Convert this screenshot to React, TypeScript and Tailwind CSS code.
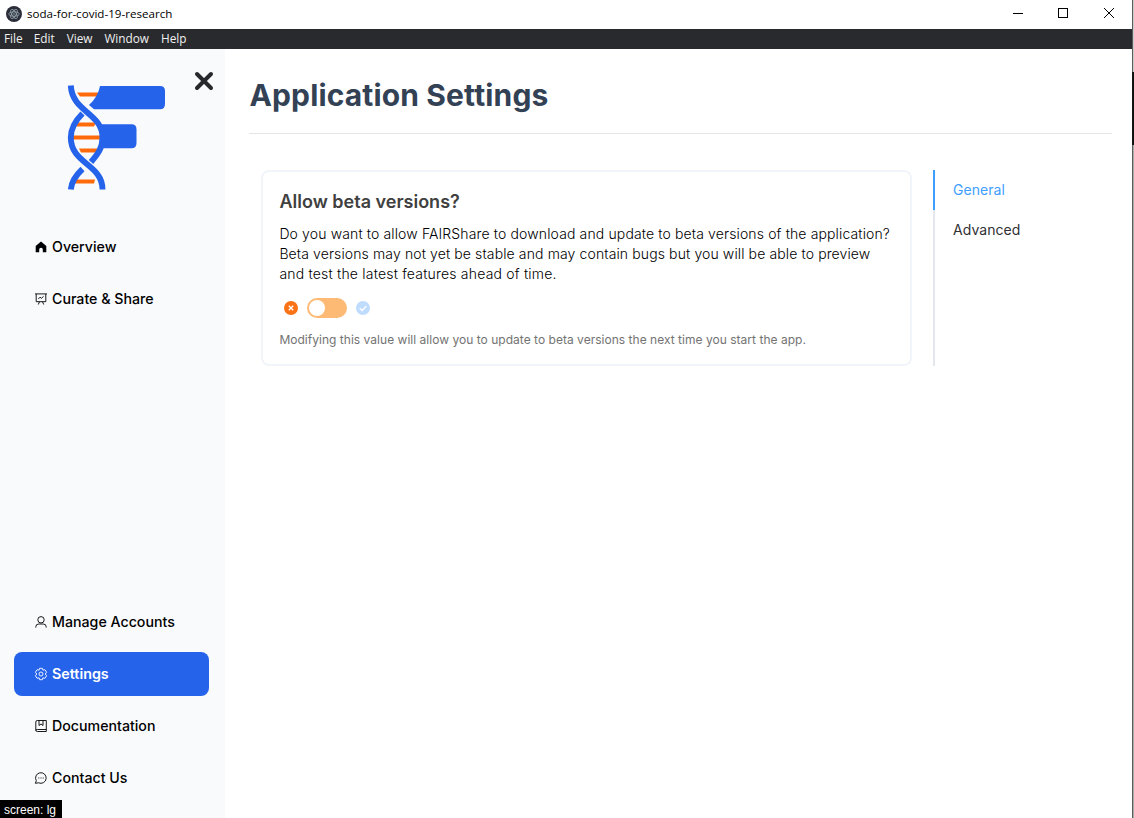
import React from "react";

function Item({ icon, label, active }: { icon: React.ReactNode; label: string; active?: boolean }) {
  return (
    <a
      className={
        active
          ? "flex h-11 items-center gap-[5px] rounded-lg bg-[#2563eb] pl-[21px] text-[14.3px] font-semibold text-white"
          : "flex h-11 items-center gap-[5px] rounded-lg pl-[21px] text-[14.2px] font-medium text-black"
      }
    >
      {icon}
      <span>{label}</span>
    </a>
  );
}

function Glyph({ children }: { children: React.ReactNode }) {
  return (
    <svg width="12" height="12" viewBox="0 0 12 12" fill="none" stroke="currentColor" strokeWidth="0.9" className="overflow-visible">
      {children}
    </svg>
  );
}

function Logo() {
  return (
    <svg width="98" height="106" viewBox="0 0 98 106" fill="none" className="mt-[36px] ml-[67px]">
      <g stroke="#ff6a0a" strokeWidth="4">
        <path d="M10 7.500L13 11.500H31V7.500ZM9 37.500H29L27 41.500H9ZM12 63.500H32V67.500H14ZM9 94.500H28L27 98.500H8Z" fill="#ff6a0a" stroke="none" />
        <path d="M6 52.500H34" />
      </g>
      <path d="M33 1H93Q98 1 98 6V19Q98 24.300 93 24.300H27L22 20Q31 12 33 1Z" fill="#2563eb" />
      <path d="M34 39.300H64.500Q69.500 39.300 69.500 44.300V58Q69.500 63.300 64.500 63.300H33Z" fill="#2563eb" />
      <g stroke="#2563eb" strokeWidth="5.900">
        <path d="M15.500 28.500C7 37 3.800 44 3.800 52.500C3.800 79 35.500 79 35.500 104.500" />
        <path d="M3.800 0.500C5 27 35.500 28 35.500 52.500C35.500 63 31 69 24 77" />
        <path d="M15.500 84C8 91 4.500 97 3.800 104.500" />
      </g>
    </svg>
  );
}

export default function App() {
  return (
    <div className="flex h-[818px] w-[1134px] overflow-hidden bg-white font-['Inter',sans-serif]">
      <div className="flex w-[1132px] flex-col">
        <header className="flex h-[29px] shrink-0 items-center bg-white">
          <svg width="16" height="16" viewBox="0 0 16 16" className="mb-[2px] ml-[6px]">
            <circle cx="8" cy="8" r="8" fill="#2b2e3a" />
            <g fill="none" stroke="#b8cdd5" strokeWidth=".7" opacity=".85">
              <ellipse cx="8" cy="8" rx="5.200" ry="2.200" />
              <ellipse cx="8" cy="8" rx="5.200" ry="2.200" transform="rotate(60 8 8)" />
              <ellipse cx="8" cy="8" rx="5.200" ry="2.200" transform="rotate(120 8 8)" />
            </g>
            <circle cx="8" cy="8" r=".7" fill="#b8cdd5" />
          </svg>
          <span className="mb-[2px] ml-[5px] font-['Open_Sans',sans-serif] text-[11.6px] text-black">soda-for-covid-19-research</span>
          <svg width="102" height="12" viewBox="0 0 102 12" fill="none" stroke="#000" className="mr-[18px] mb-[3px] ml-auto overflow-visible" shapeRendering="crispEdges">
            <path d="M1 6.500H11M46.500 1.500H55.500V10.500H46.500Z" />
            <path d="M92 1L102 11M102 1L92 11" shapeRendering="auto" />
          </svg>
        </header>
        <nav className="flex h-5 shrink-0 items-center gap-3 bg-[#292a2d] pl-1 font-['Open_Sans',sans-serif] text-[11.8px] text-[#f1f1f1]">
          <span>File</span>
          <span className="-ml-px">Edit</span>
          <span>View</span>
          <span>Window</span>
          <span>Help</span>
        </nav>
        <div className="flex min-h-0 flex-1">
          <aside className="relative flex w-[225px] shrink-0 flex-col bg-[#f9fafc]">
            <Logo />
            <svg width="20" height="20" viewBox="0 0 20 20" stroke="#27282b" strokeWidth="4" strokeLinecap="round" className="absolute top-[22px] left-[194px]">
              <path d="M3 3L17 17M17 3L3 17" />
            </svg>
            <div className="mt-[34px] flex flex-col gap-2 pr-4 pl-[14px]">
              <Item
                label="Overview"
                icon={
                  <Glyph>
                    <path d="M6 .5L.7 5V11.300H4.200V8.600A1.800 1.800 0 0 1 7.800 8.600V11.300H11.300V5Z" fill="currentColor" stroke="none" />
                  </Glyph>
                }
              />
              <Item
                label="Curate & Share"
                icon={
                  <Glyph>
                    <path d="M0 .9H12M1.200 1V8.700H10.800V1M4.500 8.700L3.300 11.500M7.500 8.700L8.700 11.500M3.300 6L5 4.200L6.500 5.300L8.600 3.300" />
                  </Glyph>
                }
              />
            </div>
            <div className="mt-auto mb-[18px] flex flex-col gap-2 pr-4 pl-[14px]">
              <Item
                label="Manage Accounts"
                icon={
                  <Glyph>
                    <circle cx="6" cy="3.800" r="3.200" />
                    <path d="M.8 11.600V10.800Q.8 8 3.800 8H8.200Q11.200 8 11.200 10.800V11.600" />
                  </Glyph>
                }
              />
              <Item
                active
                label="Settings"
                icon={
                  <Glyph>
                    <circle cx="6" cy="6" r="2" />
                    <path d="M4.600 .3H7.400L7.900 2.200L9.900 1.700L11.600 4.200L10.200 6L11.600 7.800L9.900 10.300L7.900 9.800L7.400 11.700H4.600L4.100 9.800L2.100 10.300L.4 7.800L1.800 6L.4 4.200L2.100 1.700L4.100 2.200Z" strokeLinejoin="round" />
                  </Glyph>
                }
              />
              <Item
                label="Documentation"
                icon={
                  <Glyph>
                    <path d="M2.300 .5H11.300V11.500H2.300Q.8 11.500 .8 10V2Q.8 .5 2.300 .5ZM.8 10.500Q.8 9.500 2.300 9.500H11.300M4 .5V5.500L6 4L8 5.500V.5" />
                  </Glyph>
                }
              />
              <Item
                label="Contact Us"
                icon={
                  <Glyph>
                    <path d="M.4 11.300L1.300 8.700A5.300 5.300 0 1 1 3.600 10.800L.4 11.300Z" strokeLinejoin="round" />
                    <path d="M3.300 6H4.300M5.500 6H6.500M7.700 6H8.700" />
                  </Glyph>
                }
              />
            </div>
            <div className="absolute bottom-0 left-0 flex h-[18px] w-[62px] items-center bg-black pt-px pl-1 font-['Liberation_Sans',sans-serif] text-[12px] text-white">
              screen: lg
            </div>
          </aside>
          <main className="flex min-w-0 flex-1 flex-col pr-5 pl-6">
            <h1 className="mt-[26px] h-10 pl-[0.5px] text-[30px] leading-10 font-bold tracking-[0.14px] text-[#334155]">Application Settings</h1>
            <div className="mt-[18px] h-px bg-[#e5e5e5]" />
            <div className="mt-9 flex">
              <section className="ml-3 h-[196px] w-[651px] rounded-lg border-2 border-slate-100 px-4 pt-4">
                <h2 className="pl-[0.5px] text-[18px] leading-7 font-semibold text-[#404040]">Allow beta versions?</h2>
                <p className="mt-2 flex flex-col pl-[0.4px] text-[14px] leading-5 font-light whitespace-nowrap text-black">
                  <span className="tracking-[0.135px]">Do you want to allow FAIRShare to download and update to beta versions of the application?</span>
                  <span className="tracking-[0.12px]">Beta versions may not yet be stable and may contain bugs but you will be able to preview</span>
                  <span className="tracking-[0.2px]">and test the latest features ahead of time.</span>
                </p>
                <div className="mt-[14px] flex h-5 items-center pl-[5px]">
                  <svg width="14" height="14" viewBox="0 0 14 14">
                    <circle cx="7" cy="7" r="7" fill="#f97316" />
                    <path d="M4.800 4.800L9.200 9.200M9.200 4.800L4.800 9.200" stroke="#fff" strokeWidth="1.300" />
                  </svg>
                  <div className="ml-[9px] flex h-5 w-10 items-center rounded-full bg-[#fdba74] pl-[2px]">
                    <div className="size-4 rounded-full bg-white" />
                  </div>
                  <svg width="14" height="14" viewBox="0 0 14 14" className="ml-[9px]">
                    <circle cx="7" cy="7" r="7" fill="#bfdbfe" />
                    <path d="M3.700 7.200L6.100 9.500L10.400 5" stroke="#fff" strokeWidth="1.300" fill="none" />
                  </svg>
                </div>
                <p className="mt-[14px] pl-[0.4px] text-[12px] leading-4 tracking-[0.025px] text-[#737373]">
                  Modifying this value will allow you to update to beta versions the next time you start the app.
                </p>
              </section>
              <div className="ml-[21px] flex h-[196px] flex-col">
                <div className="flex h-10 items-start border-l-2 border-[#409eff] pt-[10px] pl-[18px] text-[14px] leading-5 tracking-[0.05px] text-[#409eff]">General</div>
                <div className="flex flex-1 items-start border-l-2 border-[#e4e7ed] pt-[10px] pl-[18px] text-[14px] leading-5 tracking-[0.05px] text-[#303133]">Advanced</div>
              </div>
            </div>
          </main>
        </div>
      </div>
      <div className="flex w-px flex-col bg-[#5c5c5c]">
        <div className="mt-[72px] h-[73px] bg-[#151515]" />
      </div>
      <div className="flex w-px flex-col bg-[#aaa]">
        <div className="h-[72px] bg-[#ccc]" />
        <div className="h-[73px] bg-[#111]" />
      </div>
    </div>
  );
}
